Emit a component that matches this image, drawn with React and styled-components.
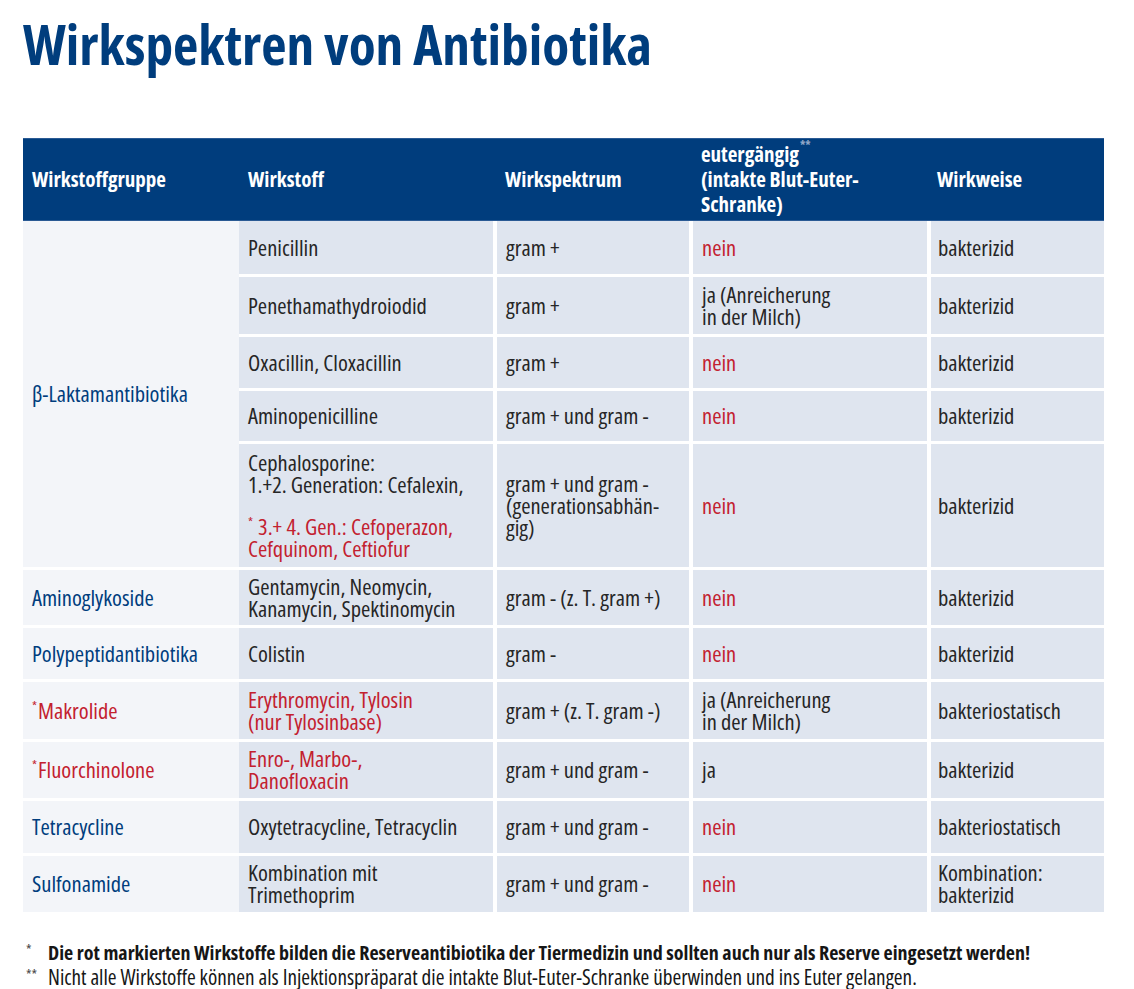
import React from "react";
import styled, { createGlobalStyle } from "styled-components";

const BLUE = "#003d7d";
const RED = "#c3212f";
const CELL = "#dfe5ef";
const GROUP = "#f3f5f9";
const INK = "#262626";

const GlobalStyle = createGlobalStyle`
  html, body { margin: 0; padding: 0; background: #fff; }
  body {
    font-family: "Open Sans", "Liberation Sans", sans-serif;
    font-stretch: 75%;
    color: ${INK};
  }
`;

const Page = styled.main`
  width: 1134px;
  padding: 14px 30px 0 23px;
  box-sizing: border-box;
`;

const Title = styled.h1`
  margin: 0 0 64px;
  font-size: 55.3px;
  line-height: 60px;
  font-weight: 700;
  color: ${BLUE};
`;

const Table = styled.table`
  width: 1081px;
  border-collapse: separate;
  border-spacing: 0;
  table-layout: fixed;
  font-size: 22.5px;
  line-height: 22px;
  font-weight: 400;
`;

const HeadRow = styled.tr`
  height: 83px;
  background: ${BLUE};
`;

const HeadCell = styled.th`
  text-align: left;
  vertical-align: middle;
  padding: 0 8px 0 ${(p) => p.$pad ?? 9}px;
  font-size: 21px;
  line-height: 25px;
  font-weight: 700;
  color: #fff;
  border-top: 1px solid #2a5a94;
  border-bottom: 1px solid #2a5a94;
`;

const HeadSup = styled.span`
  display: inline-block;
  margin-left: 1px;
  font-size: 12px;
  line-height: 12px;
  color: #8ea6c8;
  vertical-align: top;
  margin-top: -2px;
`;

const Row = styled.tr`
  height: ${(p) => p.$h}px;
`;

const Cell = styled.td`
  vertical-align: middle;
  background: ${(p) => (p.$group ? GROUP : CELL)};
  color: ${(p) => (p.$tone === "red" ? RED : p.$tone === "blue" ? BLUE : INK)};
  padding: 0 6px 0 ${(p) => p.$pad ?? 9}px;
  border-left: ${(p) => (p.$sep ? "4px solid #fff" : "0")};
  border-bottom: ${(p) => (p.$last ? "0" : "3px solid #fff")};
  white-space: pre-line;
`;

const Star = styled.span`
  display: inline-block;
  font-size: 13px;
  line-height: 13px;
  vertical-align: top;
  margin-right: ${(p) => (p.$space ? 5 : 1)}px;
`;

const Spacer = styled.span`
  display: block;
  height: 20px;
`;

const Red = styled.span`
  color: ${RED};
`;

const Notes = styled.div`
  margin-top: 29px;
  padding-left: 3px;
  display: flex;
  flex-direction: column;
`;

const Note = styled.p`
  margin: 0;
  height: 24px;
  display: flex;
  align-items: baseline;
  font-size: ${(p) => (p.$bold ? 20 : 21.2)}px;
  line-height: 24px;
  font-weight: ${(p) => (p.$bold ? 700 : 400)};
  color: #161616;
  white-space: nowrap;
`;

const NoteMark = styled.span`
  width: 22px;
  flex: none;
  font-size: 14px;
  font-weight: 400;
  color: #444;
  position: relative;
  top: -5px;
`;

const rows = [
  {
    h: 56,
    group: { text: "β-Laktamantibiotika", tone: "blue", span: 5 },
    drug: "Penicillin",
    spec: "gram +",
    euter: { text: "nein", tone: "red" },
    mode: "bakterizid",
  },
  {
    h: 60,
    drug: "Penethamathydroiodid",
    spec: "gram +",
    euter: { text: "ja (Anreicherung\nin der Milch)" },
    mode: "bakterizid",
  },
  {
    h: 54,
    drug: "Oxacillin, Cloxacillin",
    spec: "gram +",
    euter: { text: "nein", tone: "red" },
    mode: "bakterizid",
  },
  {
    h: 53,
    drug: "Aminopenicilline",
    spec: "gram + und gram -",
    euter: { text: "nein", tone: "red" },
    mode: "bakterizid",
  },
  {
    h: 126,
    drug: (
      <>
        {"Cephalosporine:\n1.+2. Generation: Cefalexin,"}
        <Spacer />
        <Red>
          <Star $space>*</Star>
          {"3.+ 4. Gen.: Cefoperazon,\nCefquinom, Ceftiofur"}
        </Red>
      </>
    ),
    spec: "gram + und gram -\n(generationsabhän-\ngig)",
    euter: { text: "nein", tone: "red" },
    mode: "bakterizid",
  },
  {
    h: 58,
    group: { text: "Aminoglykoside", tone: "blue" },
    drug: "Gentamycin, Neomycin,\nKanamycin, Spektinomycin",
    spec: "gram - (z. T. gram +)",
    euter: { text: "nein", tone: "red" },
    mode: "bakterizid",
  },
  {
    h: 54,
    group: { text: "Polypeptidantibiotika", tone: "blue" },
    drug: "Colistin",
    spec: "gram -",
    euter: { text: "nein", tone: "red" },
    mode: "bakterizid",
  },
  {
    h: 60,
    group: { text: "Makrolide", tone: "red", star: true },
    drug: "Erythromycin, Tylosin\n(nur Tylosinbase)",
    drugTone: "red",
    spec: "gram + (z. T. gram -)",
    euter: { text: "ja (Anreicherung\nin der Milch)" },
    mode: "bakteriostatisch",
  },
  {
    h: 59,
    group: { text: "Fluorchinolone", tone: "red", star: true },
    drug: "Enro-, Marbo-,\nDanofloxacin",
    drugTone: "red",
    spec: "gram + und gram -",
    euter: { text: "ja" },
    mode: "bakterizid",
  },
  {
    h: 55,
    group: { text: "Tetracycline", tone: "blue" },
    drug: "Oxytetracycline, Tetracyclin",
    spec: "gram + und gram -",
    euter: { text: "nein", tone: "red" },
    mode: "bakteriostatisch",
  },
  {
    h: 56,
    group: { text: "Sulfonamide", tone: "blue" },
    drug: "Kombination mit\nTrimethoprim",
    spec: "gram + und gram -",
    euter: { text: "nein", tone: "red" },
    mode: "Kombination:\nbakterizid",
  },
];

export default function App() {
  return (
    <Page>
      <GlobalStyle />
      <Title>Wirkspektren von Antibiotika</Title>
      <Table>
        <colgroup>
          <col width="216" />
          <col width="254" />
          <col width="196" />
          <col width="238" />
          <col width="177" />
        </colgroup>
        <thead>
          <HeadRow>
            <HeadCell>Wirkstoffgruppe</HeadCell>
            <HeadCell>Wirkstoff</HeadCell>
            <HeadCell $pad={12}>Wirkspektrum</HeadCell>
            <HeadCell $pad={12}>
              eutergängig<HeadSup>**</HeadSup>
              <br />
              (intakte Blut-Euter-
              <br />
              Schranke)
            </HeadCell>
            <HeadCell $pad={10}>Wirkweise</HeadCell>
          </HeadRow>
        </thead>
        <tbody>
          {rows.map((r, i) => {
            const last = i === rows.length - 1;
            return (
              <Row key={i} $h={r.h}>
                {r.group && (
                  <Cell $group $tone={r.group.tone} rowSpan={r.group.span || 1} $last={last}>
                    {r.group.star && <Star>*</Star>}
                    {r.group.text}
                  </Cell>
                )}
                <Cell $tone={r.drugTone} $last={last}>
                  {r.drug}
                </Cell>
                <Cell $sep $last={last}>
                  {r.spec}
                </Cell>
                <Cell $sep $tone={r.euter.tone} $last={last}>
                  {r.euter.text}
                </Cell>
                <Cell $sep $pad={7} $last={last}>
                  {r.mode}
                </Cell>
              </Row>
            );
          })}
        </tbody>
      </Table>
      <Notes>
        <Note $bold>
          <NoteMark>*</NoteMark>
          Die rot markierten Wirkstoffe bilden die Reserveantibiotika der Tiermedizin und sollten auch nur als Reserve eingesetzt werden!
        </Note>
        <Note>
          <NoteMark>**</NoteMark>
          Nicht alle Wirkstoffe können als Injektionspräparat die intakte Blut-Euter-Schranke überwinden und ins Euter gelangen.
        </Note>
      </Notes>
    </Page>
  );
}
